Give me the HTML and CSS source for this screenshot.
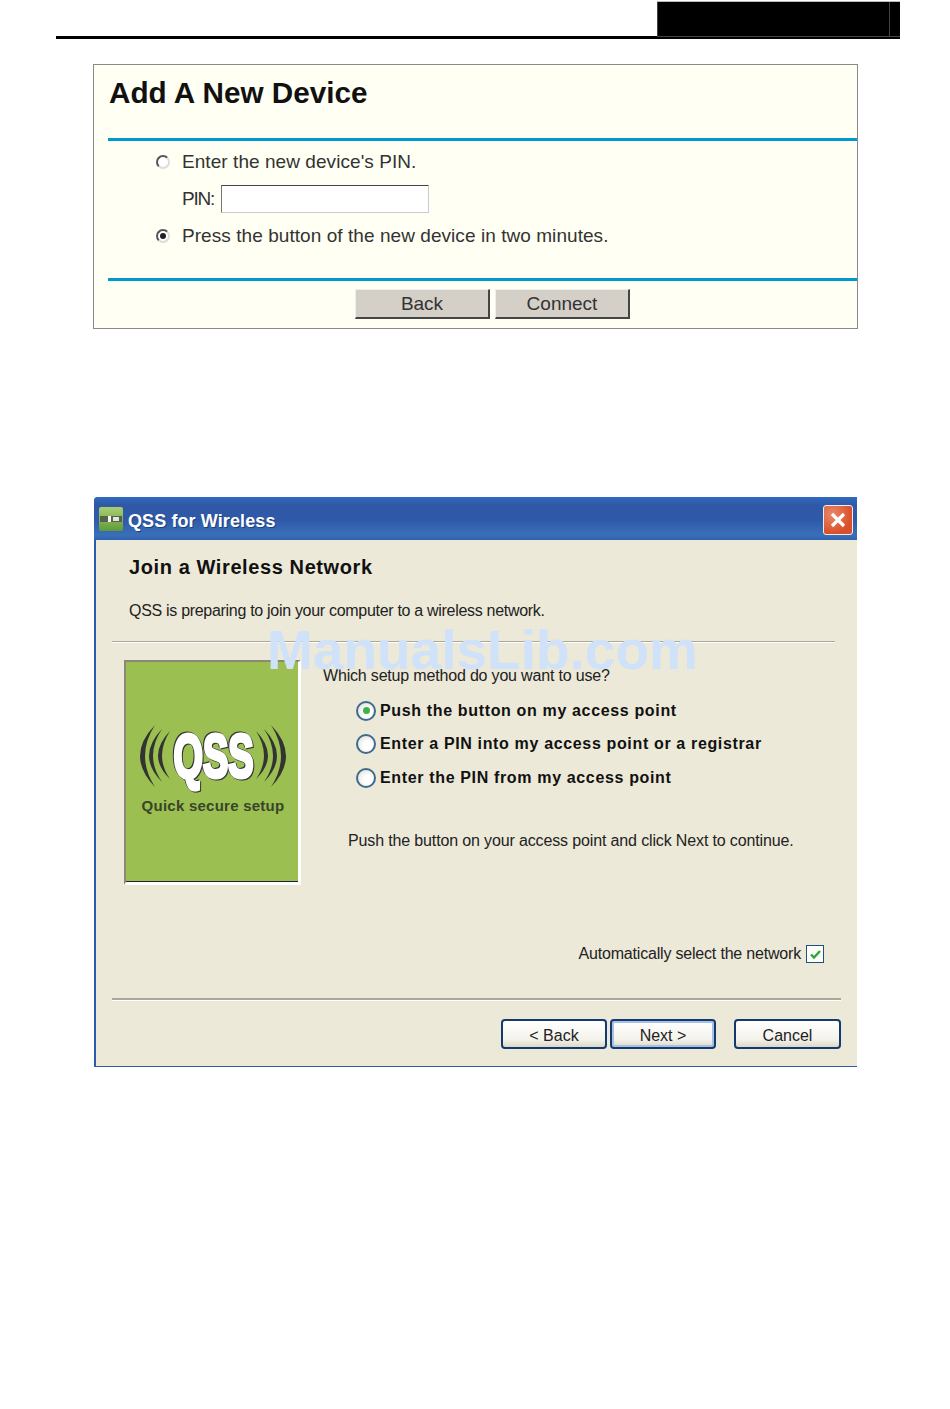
FILE: index.html
```html
<!DOCTYPE html>
<html lang="en">
<head>
 <meta charset="UTF-8" />
 <title>QSS setup</title>
 <link rel="stylesheet" href="styles.css">
</head>
<body>
 <!-- Page header strip -->
 <div class="page-head"><div class="head-block"><div class="head-tick"></div></div></div>

 <!-- Router web page -->
 <div class="card">
   <h1>Add A New Device</h1>
   <div class="card-rule"></div>
   <div class="card-form">
     <div class="card-row"><span class="web-radio"></span><span>Enter the new device's PIN.</span></div>
     <div class="card-row pin-row"><span class="pin-label">PIN:</span><div class="pin-input"></div></div>
     <div class="card-row"><span class="web-radio checked"></span><span>Press the button of the new device in two minutes.</span></div>
   </div>
   <div class="card-rule"></div>
   <div class="card-btns">
     <div class="web-btn">Back</div>
     <div class="web-btn">Connect</div>
   </div>
 </div>

 <!-- XP style dialog -->
 <div class="dialog">
   <div class="titlebar">
     <svg class="app-icon" width="24" height="24" viewBox="0 0 24 24">
       <defs>
         <linearGradient id="iconfill" x1="0" y1="0" x2="0" y2="1">
           <stop offset="0" stop-color="#a9cf74"/>
           <stop offset="1" stop-color="#5f9a38"/>
         </linearGradient>
       </defs>
       <rect width="24" height="24" rx="2" fill="url(#iconfill)"/>
       <rect x="1" y="9" width="22" height="6" fill="#55634a"/>
       <rect x="9" y="9" width="3" height="6" fill="#f4f4f0"/>
       <rect x="14" y="10" width="6" height="4" fill="#e3e6dc"/>
     </svg>
     <span class="title-text">QSS for Wireless</span>
     <div class="close-btn">
       <svg width="18" height="18" viewBox="0 0 18 18">
         <path d="M3 3 L15 15 M15 3 L3 15" stroke="#fff" stroke-width="3.2" fill="none"/>
       </svg>
     </div>
   </div>

   <div class="dialog-body">
     <h2>Join a Wireless Network</h2>
     <p class="intro">QSS is preparing to join your computer to a wireless network.</p>
     <div class="rule rule-short"></div>

     <div class="main">
       <div class="qss-panel">
         <svg class="qss-logo" width="150" height="66" viewBox="0 0 150 66">
           <g id="waves" fill="#333">
             <path d="M17 1 Q-13 32 17 63 Q-3 32 17 1Z"/>
             <path d="M24 5 Q-2 32 24 58 Q6 32 24 5Z"/>
             <path d="M32 7 Q8 32 32 55 Q16 32 32 7Z"/>
           </g>
           <use href="#waves" transform="translate(150) scale(-1,1)"/>
           <text x="35.5" y="53" textLength="80" lengthAdjust="spacingAndGlyphs" class="qss-word">QSS</text>
         </svg>
         <div class="qss-caption">Quick secure setup</div>
       </div>

       <div class="options">
         <div class="question">Which setup method do you want to use?</div>
         <div class="option"><span class="xp-radio checked"></span><span>Push the button on my access point</span></div>
         <div class="option"><span class="xp-radio"></span><span>Enter a PIN into my access point or a registrar</span></div>
         <div class="option"><span class="xp-radio"></span><span>Enter the PIN from my access point</span></div>
         <div class="hint">Push the button on your access point and click Next to continue.</div>
       </div>
     </div>

     <div class="auto-row">
       <span>Automatically select the network</span>
       <span class="xp-check">
         <svg width="13" height="13" viewBox="0 0 13 13">
           <path d="M2 6.5 L5 9.5 L11 3" stroke="#2fa33c" stroke-width="2.4" fill="none"/>
         </svg>
       </span>
     </div>

     <div class="rule"></div>

     <div class="dialog-btns">
       <div class="xp-btn">&lt; Back</div>
       <div class="xp-btn default">Next &gt;</div>
       <div class="xp-btn cancel">Cancel</div>
     </div>
   </div>

   <div class="watermark">ManualsLib.com</div>
 </div>
</body>
</html>
```
FILE: styles.css
```css
/* Reset */
* {
  margin: 0;
  padding: 0;
  box-sizing: border-box;
}
html, body {
  background: #fff;
  font-family: "Liberation Sans", Arial, sans-serif;
  color: #111;
}
body {
  height: 1409px;
  overflow: hidden;
}
/* Header strip */
.page-head {
  height: 39px;
  margin: 0 50px 0 56px;
  border-bottom: 3px solid #000;
  display: flex;
  justify-content: flex-end;
}
.head-block {
  width: 243px;
  height: 35px;
  margin-top: 2px;
  background: #000;
  border-bottom: 1px solid #444;
  border-left: 1px solid #444;
  box-shadow: 0 -1px 0 #bbb;
  display: flex;
  justify-content: flex-end;
}
.head-tick {
  width: 1px;
  margin-right: 10px;
  background: #444;
}
/* Router web page */
.card {
  width: 765px;
  height: 265px;
  margin: 25px 0 0 93px;
  background: #fffff3;
  border: 1px solid #8a8a8a;
}
.card h1 {
  height: 73px;
  padding: 11px 0 0 15px;
  font-size: 29.7px;
  line-height: 34px;
  font-weight: bold;
  color: #111;
}
.card-rule {
  height: 3px;
  margin-left: 14px;
  background: #0099cc;
}
.card-form {
  height: 137px;
  padding: 2px 0 0 62px;
  font-size: 19px;
  letter-spacing: 0.06px;
  color: #333;
}
.card-row {
  height: 37px;
  display: flex;
  align-items: center;
}
.web-radio {
  width: 14px;
  height: 14px;
  margin-right: 12px;
  border-radius: 50%;
  border: 2px solid;
  border-color: #555 #ddd #ddd #555;
  background: #fff;
  display: flex;
  align-items: center;
  justify-content: center;
}
.web-radio.checked::before {
  content: "";
  width: 6px;
  height: 6px;
  border-radius: 50%;
  background: #222;
}
.pin-row {
  padding-left: 26px;
  gap: 7px;
}
.pin-label {
  letter-spacing: -1.2px;
}
.pin-input {
  width: 208px;
  height: 28px;
  background: #fff;
  border: 1px solid;
  border-color: #444 #ccc #ccc #777;
}
.card-btns {
  display: flex;
  justify-content: flex-start;
  gap: 5px;
  padding: 8px 0 0 261px;
}
.web-btn {
  width: 135px;
  height: 30px;
  background: #d4d0c8;
  border-right: 2px solid #444;
  border-bottom: 2px solid #444;
  border-top: 1px solid #eee;
  border-left: 1px solid #eee;
  color: #333;
  font-size: 19px;
  line-height: 28px;
  text-align: center;
}
/* Dialog */
.dialog {
  position: relative;
  width: 763px;
  height: 570px;
  margin: 168px 0 0 94px;
  background: #ece9d8;
  border-left: 2px solid #2c5bab;
  border-bottom: 1px solid #2f5cae;
  border-top-left-radius: 4px;
}
.titlebar {
  height: 43px;
  margin-left: -2px;
  padding: 10px 4px 0 5px;
  display: flex;
  align-items: flex-start;
  background: linear-gradient(#2f6bc0 0, #3058a6 8px, #2f58a8 22px, #3a6fb8 38px, #2f62b2 43px);
  border-top-left-radius: 4px;
}
.title-text {
  margin-left: 5px;
  padding-top: 2px;
  color: #fff;
  font-size: 18px;
  line-height: 24px;
  font-weight: bold;
  letter-spacing: 0.1px;
  text-shadow: 1px 1px 0 #1d3f80;
}
.close-btn {
  width: 30px;
  height: 30px;
  margin: -2px 0 0 auto;
  border: 1px solid #e8eef8;
  border-radius: 3px;
  background: radial-gradient(circle at 30% 30%, #e88a6c, #d94f28 70%);
  display: flex;
  align-items: center;
  justify-content: center;
}
.dialog-body {
  padding: 0 16px 0 16px;
}
.dialog-body h2 {
  height: 54px;
  padding: 16px 0 0 17px;
  font-size: 20px;
  line-height: 22px;
  font-weight: bold;
  letter-spacing: 0.6px;
}
.intro {
  height: 47px;
  padding: 7px 0 0 17px;
  font-size: 16px;
  line-height: 20px;
  letter-spacing: -0.3px;
  color: #222;
}
.rule {
  height: 3px;
  background: #aca899;
  border-bottom: 1px solid #fff;
}
.rule-short {
  height: 2px;
  margin-right: 6px;
}
.main {
  display: flex;
  height: 302px;
  padding: 17px 0 0 12px;
}
.qss-panel {
  width: 177px;
  height: 225px;
  background: #9bbf51;
  border-top: 2px solid #8b8875;
  border-left: 2px solid #8b8875;
  border-right: 3px solid #fff;
  border-bottom: 3px solid #fff;
  box-shadow: inset 0 -1px 0 #1a2433;
  padding: 62px 0 0 12px;
}
.qss-logo {
  display: block;
  overflow: visible;
}
.qss-word {
  font-family: "Liberation Sans", Arial, sans-serif;
  font-size: 62px;
  font-weight: bold;
  fill: #fff;
  stroke: #fff;
  stroke-width: 4px;
  filter: drop-shadow(1px 1px 0 #333) drop-shadow(-1px -1px 0 #333);
}
.qss-caption {
  margin-top: 7px;
  width: 150px;
  text-align: center;
  font-size: 15px;
  font-weight: bold;
  letter-spacing: 0.25px;
  color: #39452a;
  white-space: nowrap;
}
.options {
  padding-left: 22px;
  font-size: 16px;
}
.question {
  height: 28px;
  line-height: 20px;
  margin-top: 6px;
  letter-spacing: -0.18px;
  color: #222;
}
.option {
  height: 33.5px;
  margin-left: 33px;
  display: flex;
  align-items: center;
  gap: 4px;
  font-weight: bold;
  letter-spacing: 0.65px;
}
.xp-radio {
  width: 20px;
  height: 20px;
  border-radius: 50%;
  border: 2px solid #3e6a8f;
  background: radial-gradient(circle at 60% 60%, #fff 30%, #dcd9cf 100%);
  display: flex;
  align-items: center;
  justify-content: center;
}
.xp-radio.checked::before {
  content: "";
  width: 7px;
  height: 7px;
  border-radius: 50%;
  background: #3cb24a;
}
.hint {
  margin: 36px 0 0 25px;
  line-height: 20px;
  letter-spacing: -0.14px;
  color: #222;
}
.auto-row {
  height: 53px;
  padding-right: 17px;
  display: flex;
  justify-content: flex-end;
  gap: 5px;
  font-size: 16px;
  line-height: 18px;
  letter-spacing: -0.19px;
  color: #222;
}
.xp-check {
  width: 18px;
  height: 18px;
  background: #fdfdf8;
  border: 1px solid #1c5180;
  display: flex;
  align-items: center;
  justify-content: center;
}
.dialog-btns {
  display: flex;
  gap: 3px;
  padding: 18px 0 0 389px;
}
.xp-btn {
  width: 106px;
  height: 30px;
  background: linear-gradient(#fff, #f4f3ec 70%, #dcd8c8);
  border: 2px solid #123a70;
  border-radius: 4px;
  font-size: 16px;
  line-height: 30px;
  text-align: center;
  color: #222;
}
.xp-btn.default {
  box-shadow: inset 0 0 0 2px #a9c0e6;
}
.xp-btn.cancel {
  width: 107px;
  margin-left: 15px;
}
/* Watermark lies over the dialog */
.watermark {
  position: absolute;
  left: 171px;
  top: 120px;
  color: #cfe2fa;
  font-size: 55px;
  line-height: 66px;
  font-weight: bold;
  white-space: nowrap;
}
```
